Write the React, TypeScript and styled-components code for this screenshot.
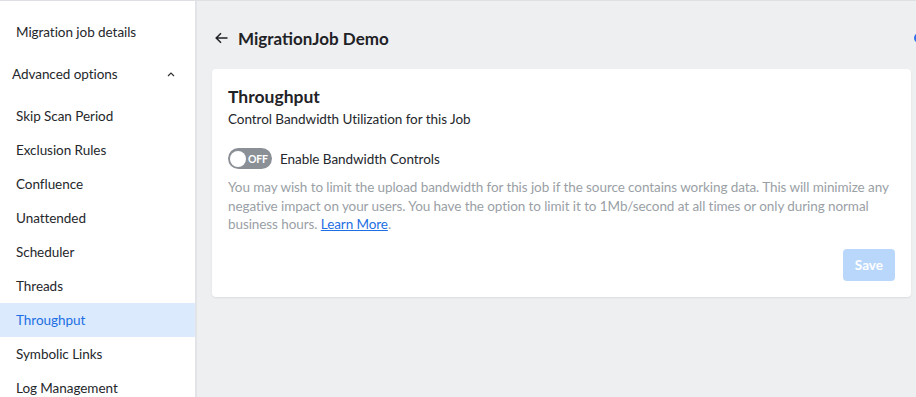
import React from "react";
import styled, {createGlobalStyle} from "styled-components";

const GlobalStyle = createGlobalStyle`
  html, body {
    margin: 0;
    padding: 0;
    height: 100%;
  }
  body {
    font-family: "Lato", "Liberation Sans", sans-serif;
    background: #eeeff1;
    color: #24272b;
    overflow: hidden;
  }
  #root {
    height: 100%;
  }
`

const Page = styled.div`
  display: flex;
  height: 397px;
  border-top: 1px solid #dfe0e3;
  box-sizing: border-box;
`

const Sidebar = styled.nav`
  width: 195px;
  flex-shrink: 0;
  background: #fff;
  border-right: 2px solid #e3e4e7;
  padding-top: 14px;
  display: flex;
  flex-direction: column;
  overflow: hidden;
`

const NavItem = styled.div<{ $active?: boolean; $group?: boolean }>`
  height: 34px;
  flex-shrink: 0;
  display: flex;
  align-items: center;
  justify-content: space-between;
  padding: ${p => p.$group ? "0 20px 0 12px" : "0 0 0 16px"};
  margin-bottom: ${p => p.$group ? "8px" : "0"};
  font-size: 13.5px;
  letter-spacing: -0.05px;
  color: ${p => p.$active ? "#1d6fe3" : "#24272b"};
  background: ${p => p.$active ? "#dbeafd" : "transparent"};
`

const Main = styled.main`
  flex: 1;
  min-width: 0;
  padding: 23px 5px 0 15px;
  overflow: hidden;
`

const Header = styled.div`
  height: 28px;
  display: flex;
  align-items: center;
  gap: 10px;
  margin-bottom: 17px;
  padding-left: 3px;
`

const PageTitle = styled.h1`
  margin: 0;
  flex: 1;
  font-size: 17px;
  font-weight: 700;
  color: #1f2226;
`

const Dot = styled.span`
  width: 10px;
  height: 10px;
  border-radius: 50%;
  background: #2f6fe8;
  margin-right: -13px;
`

const Card = styled.section`
  background: #fff;
  border-radius: 4px;
  box-shadow: 0 1px 2px rgba(0, 0, 0, 0.08);
  padding: 16px;
`

const CardTitle = styled.h2`
  margin: 0;
  font-size: 17.5px;
  line-height: 24px;
  font-weight: 700;
  color: #1f2226;
`

const CardSub = styled.p`
  margin: 1px 0 0;
  font-size: 13.5px;
  line-height: 18px;
  letter-spacing: -0.05px;
  color: #24272b;
`

const ToggleRow = styled.label`
  display: flex;
  align-items: center;
  gap: 8px;
  margin-top: 20px;
  font-size: 13.5px;
  letter-spacing: -0.05px;
  color: #24272b;
`

const Toggle = styled.span`
  width: 44px;
  height: 21px;
  border-radius: 11px;
  background: #8b8f96;
  display: flex;
  align-items: center;
  padding: 0 4px 0 2px;
  box-sizing: border-box;
  gap: 2px;
`

const Knob = styled.span`
  width: 16px;
  height: 16px;
  border-radius: 50%;
  background: #fff;
`

const ToggleText = styled.span`
  font-size: 10.5px;
  font-weight: 700;
  color: #fff;
  letter-spacing: -0.2px;
`

const Description = styled.p`
  margin: 9px 0 0;
  font-size: 13.5px;
  line-height: 18.5px;
  letter-spacing: -0.08px;
  color: #9a9fa6;
  white-space: nowrap;
`

const Link = styled.a`
  color: #1d6fe3;
  text-decoration: underline;
`

const Footer = styled.div`
  display: flex;
  justify-content: flex-end;
  margin-top: 15px;
`

const SaveButton = styled.button`
  height: 32px;
  padding: 0 12px;
  border: none;
  border-radius: 4px;
  background: #b9d7fb;
  color: #fff;
  font-family: inherit;
  font-size: 13.5px;
  font-weight: 700;
`

const items = [
    "Skip Scan Period",
    "Exclusion Rules",
    "Confluence",
    "Unattended",
    "Scheduler",
    "Threads",
    "Throughput",
    "Symbolic Links",
    "Log Management",
]

const App = () => {
    return (
        <>
            <GlobalStyle/>
            <Page>
                <Sidebar>
                    <NavItem $group style={{paddingLeft: 16}}>Migration job details</NavItem>
                    <NavItem $group>
                        Advanced options
                        <svg width="8" height="6" viewBox="0 0 8 6">
                            <polyline points="1,5 4,2 7,5" fill="none" stroke="#333" strokeWidth="1.2"/>
                        </svg>
                    </NavItem>
                    {items.map(item => (
                        <NavItem key={item} $active={item === "Throughput"}>{item}</NavItem>
                    ))}
                </Sidebar>
                <Main>
                    <Header>
                        <svg width="13" height="12" viewBox="0 0 13 12">
                            <path d="M12.5 6H1.5M6 1.2L1.2 6L6 10.8" fill="none" stroke="#1f2226" strokeWidth="1.5"/>
                        </svg>
                        <PageTitle>MigrationJob Demo</PageTitle>
                        <Dot/>
                    </Header>
                    <Card>
                        <CardTitle>Throughput</CardTitle>
                        <CardSub>Control Bandwidth Utilization for this Job</CardSub>
                        <ToggleRow>
                            <Toggle>
                                <Knob/>
                                <ToggleText>OFF</ToggleText>
                            </Toggle>
                            Enable Bandwidth Controls
                        </ToggleRow>
                        <Description>
                            You may wish to limit the upload bandwidth for this job if the source contains working data. This will minimize any<br/>
                            negative impact on your users. You have the option to limit it to 1Mb/second at all times or only during normal<br/>
                            business hours. <Link href="#">Learn More</Link>.
                        </Description>
                        <Footer>
                            <SaveButton>Save</SaveButton>
                        </Footer>
                    </Card>
                </Main>
            </Page>
        </>
    )
}

export default App
